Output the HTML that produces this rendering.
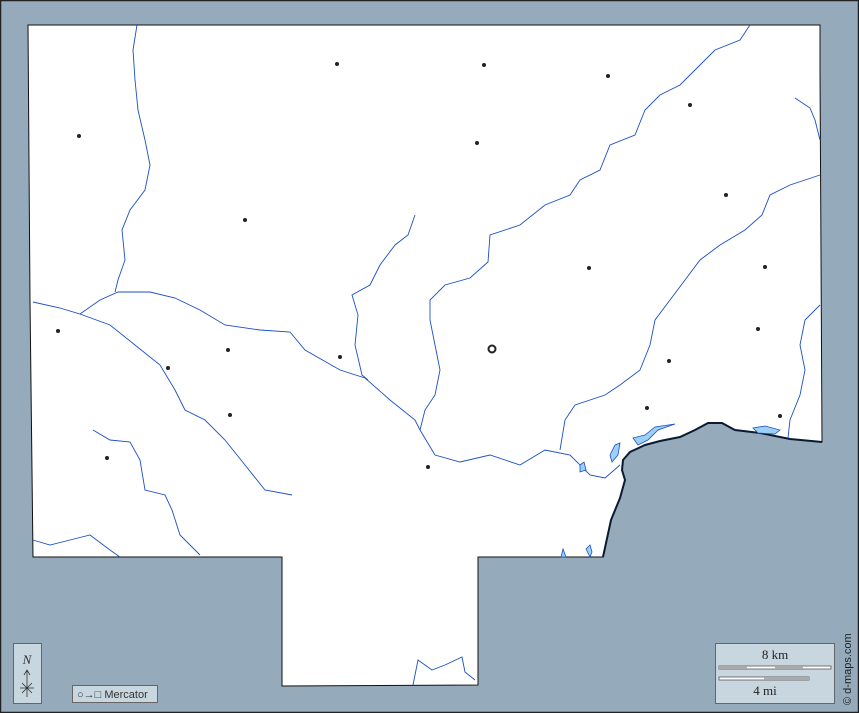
<!DOCTYPE html>
<html><head><style>
html,body{margin:0;padding:0;background:#95abbb}
svg{display:block}
</style></head><body>
<svg width="859" height="713" viewBox="0 0 859 713" xmlns="http://www.w3.org/2000/svg">
<rect x="0" y="0" width="859" height="713" fill="#95abbb"/>
<rect x="0.5" y="0.5" width="858" height="712" fill="none" stroke="#222" stroke-width="1.5"/>
<path d="M28,25 L820,25 L820,70 L822,442 L790,439 L760,433 L735,430 L722,423 L708,423 L695,430 L680,437 L660,441 L645,445 L630,452 L623,460 L622,470 L625,480 L620,498 L611,520 L603,557 L478,557 L478,685 L282,686 L282,557 L33,557 L30,300 Z" fill="#fff" stroke="#111" stroke-width="1"/>
<path d="M822,442 L790,439 L760,433 L735,430 L722,423 L708,423 L695,430 L680,437 L660,441 L645,445 L630,452 L623,460 L622,470 L625,480 L620,498 L611,520 L603,557" fill="none" stroke="#0a1a33" stroke-width="2"/>
<g fill="none" stroke="#1a4fc4" stroke-width="0.9">
<path d="M137,25 L133,50 L135,80 L138,110 L145,140 L150,165 L145,190 L130,210 L122,230 L125,260 L118,280 L115,292"/>
<path d="M33,302 L60,308 L80,314 L100,300 L118,292 L150,292 L175,298 L200,310 L225,325 L260,330 L290,332 L305,350 L340,370 L365,378 L390,400 L415,420 L420,430 L435,455 L460,462 L490,455 L520,465 L545,450 L570,455 L590,475 L605,478 L620,465"/>
<path d="M80,314 L110,325 L135,345 L160,365 L175,390 L185,410 L205,420 L225,440 L245,465 L265,490 L292,495"/>
<path d="M415,215 L408,235 L395,245 L380,265 L370,285 L352,295 L358,315 L355,345 L362,375 L368,380"/>
<path d="M420,430 L425,410 L435,395 L440,370 L435,345 L430,320 L430,300 L445,285 L470,278 L488,262 L490,235 L520,225 L545,205 L570,195 L580,180 L600,170 L610,145 L635,135 L645,110 L660,95 L680,85 L695,70 L715,50 L740,40 L750,25"/>
<path d="M820,175 L790,185 L770,195 L762,215 L745,230 L720,245 L700,260 L685,280 L670,300 L655,320 L650,345 L640,370 L620,385 L605,395 L575,405 L565,420 L560,450"/>
<path d="M795,98 L810,108 L815,120 L820,140"/>
<path d="M820,305 L805,320 L800,345 L805,370 L800,395 L790,420 L788,438"/>
<path d="M93,430 L110,440 L130,442 L140,460 L145,490 L165,495 L172,510 L180,535 L200,555"/>
<path d="M33,540 L50,545 L70,540 L90,535 L110,550 L120,557"/>
<path d="M413,685 L418,660 L432,670 L445,665 L462,657 L465,672 L475,680"/>
</g>
<g fill="#9dd0f5" stroke="#1a4fc4" stroke-width="0.8">
<path d="M633,438 L645,435 L655,427 L675,424 L658,430 L648,440 L638,445 Z"/>
<path d="M610,455 L615,445 L620,443 L618,455 L612,462 Z"/>
<path d="M580,465 L584,462 L586,470 L580,472 Z"/>
<path d="M753,428 L765,426 L780,430 L775,434 L758,433 Z"/>
<path d="M561,557 L563,549 L566,557 Z"/>
<path d="M586,549 L590,545 L592,552 L590,557 Z"/>
</g>
<g fill="#222">
<circle cx="337" cy="64" r="2"/><circle cx="484" cy="65" r="2"/><circle cx="608" cy="76" r="2"/>
<circle cx="79" cy="136" r="2"/><circle cx="690" cy="105" r="2"/><circle cx="477" cy="143" r="2"/>
<circle cx="245" cy="220" r="2"/><circle cx="726" cy="195" r="2"/><circle cx="589" cy="268" r="2"/>
<circle cx="765" cy="267" r="2"/><circle cx="58" cy="331" r="2"/><circle cx="758" cy="329" r="2"/>
<circle cx="228" cy="350" r="2"/><circle cx="340" cy="357" r="2"/><circle cx="669" cy="361" r="2"/>
<circle cx="168" cy="368" r="2"/><circle cx="230" cy="415" r="2"/><circle cx="647" cy="408" r="2"/>
<circle cx="780" cy="416" r="2"/><circle cx="107" cy="458" r="2"/><circle cx="428" cy="467" r="2"/>
</g>
<circle cx="492" cy="349" r="3.5" fill="none" stroke="#222" stroke-width="2"/>
<rect x="13" y="644" width="13" height="0" />
<rect x="13.5" y="643.5" width="28" height="60" fill="#c8d6e0" stroke="#666"/>
<text x="27" y="664" font-family="Liberation Serif" font-style="italic" font-size="13" text-anchor="middle" fill="#333">N</text>
<path d="M27,697 L27,670 M24,675 L27,670 L30,675 M20,688 L34,688 M22,683 L32,693 M22,693 L32,683" stroke="#333" stroke-width="0.8" fill="none"/>
<rect x="72.5" y="685.5" width="85" height="17" fill="#c8d6e0" stroke="#666"/>
<text x="77" y="698" font-family="Liberation Sans" font-size="11" fill="#333">○→□ Mercator</text>
<rect x="715.5" y="643.5" width="119" height="60" fill="#c8d6e0" stroke="#666"/>
<text x="775" y="659" font-family="Liberation Serif" font-size="13" text-anchor="middle" fill="#222">8 km</text>
<rect x="719" y="666" width="112" height="3" fill="#fff" stroke="#444" stroke-width="0.7"/>
<rect x="719" y="666" width="28" height="3" fill="#aaa"/><rect x="775" y="666" width="28" height="3" fill="#aaa"/>
<rect x="719" y="677" width="90" height="3" fill="#fff" stroke="#444" stroke-width="0.7"/>
<rect x="764" y="677" width="45" height="3" fill="#aaa"/>
<text x="765" y="695" font-family="Liberation Serif" font-size="13" text-anchor="middle" fill="#222">4 mi</text>
<text x="851" y="705" font-family="Liberation Sans" font-size="11" fill="#222" transform="rotate(-90 851 705)">© d-maps.com</text>
</svg>
</body></html>
